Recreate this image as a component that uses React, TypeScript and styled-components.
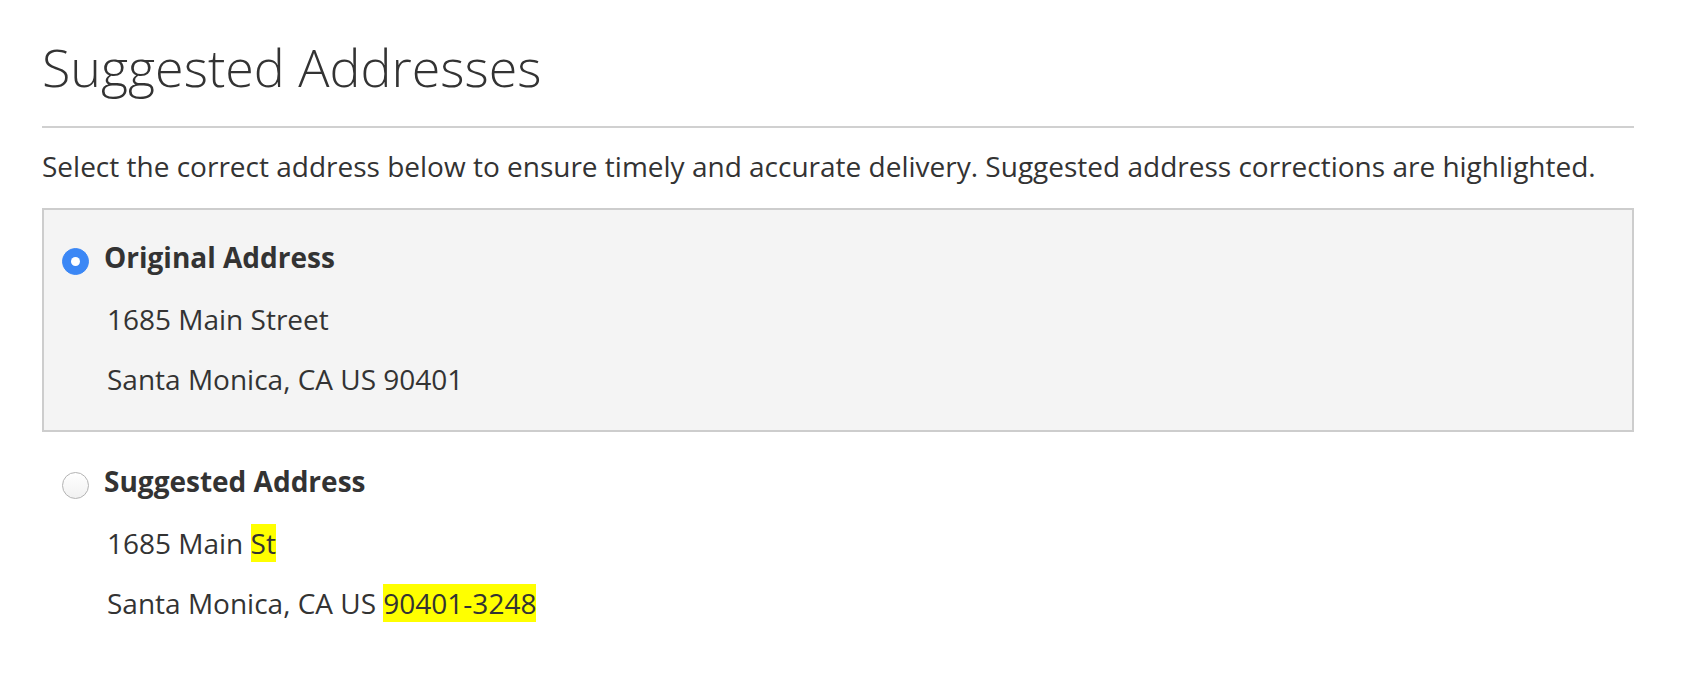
import React, { useState } from 'react';
import styled, { createGlobalStyle } from 'styled-components';

const GlobalStyle = createGlobalStyle`
  html, body {
    margin: 0;
    padding: 0;
    background: #fff;
  }
  body {
    font-family: "Open Sans", "Noto Sans", sans-serif;
    color: #333;
  }
`;

const Page = styled.div`
  padding: 32px 72px 20px 42px;
`;

const Header = styled.div`
  padding-bottom: 24px;
  border-bottom: 2px solid #d0d0d0;
`;

const Title = styled.h1`
  margin: 0;
  font-size: 52px;
  line-height: 70px;
  font-weight: 300;
  color: #333;
`;

const Intro = styled.p`
  margin: 19px 0 23px;
  font-size: 28px;
  line-height: 38px;
`;

const Option = styled.label<{ $selected: boolean }>`
  display: block;
  padding: 28px 20px 32px 18px;
  border: 2px solid ${({ $selected }) => ($selected ? '#cdcdcd' : 'transparent')};
  background: ${({ $selected }) => ($selected ? '#f4f4f4' : 'transparent')};
  cursor: pointer;
`;

const OptionHead = styled.div`
  display: flex;
  align-items: flex-start;
  gap: 15px;
`;

const Radio = styled.span<{ $checked: boolean }>`
  flex: none;
  position: relative;
  width: 27px;
  height: 27px;
  margin-top: 10px;
  border-radius: 50%;
  box-sizing: border-box;
  background: ${({ $checked }) =>
    $checked ? '#3b87f5' : 'linear-gradient(#fff, #f1f1f1)'};
  border: 1px solid ${({ $checked }) => ($checked ? '#3b87f5' : '#b3b3b3')};

  &::after {
    content: '';
    display: ${({ $checked }) => ($checked ? 'block' : 'none')};
    position: absolute;
    left: 50%;
    top: 50%;
    width: 9px;
    height: 9px;
    margin: -4.5px 0 0 -4.5px;
    border-radius: 50%;
    background: #fff;
  }
`;

const OptionName = styled.span`
  font-size: 28px;
  line-height: 38px;
  font-weight: 700;
`;

const Lines = styled.div`
  padding-left: 45px;
`;

const Line = styled.div`
  margin-top: 22px;
  font-size: 28px;
  line-height: 38px;

  &:first-child {
    margin-top: 24px;
  }
`;

const Mark = styled.mark`
  background: #ffff00;
  color: inherit;
`;

type Part = { text: string; changed?: boolean };

interface Address {
  id: string;
  name: string;
  lines: Part[][];
}

const addresses: Address[] = [
  {
    id: 'original',
    name: 'Original Address',
    lines: [
      [{ text: '1685 Main Street' }],
      [{ text: 'Santa Monica, CA US 90401' }],
    ],
  },
  {
    id: 'suggested',
    name: 'Suggested Address',
    lines: [
      [{ text: '1685 Main ' }, { text: 'St', changed: true }],
      [{ text: 'Santa Monica, CA US ' }, { text: '90401-3248', changed: true }],
    ],
  },
];

const App = () => {
  const [selected, setSelected] = useState('original');

  return (
    <>
      <GlobalStyle />
      <Page>
        <Header>
          <Title>Suggested Addresses</Title>
        </Header>
        <Intro>
          Select the correct address below to ensure timely and accurate delivery. Suggested
          address corrections are highlighted.
        </Intro>
        {addresses.map((a) => (
          <Option key={a.id} $selected={selected === a.id} onClick={() => setSelected(a.id)}>
            <OptionHead>
              <Radio $checked={selected === a.id} />
              <OptionName>{a.name}</OptionName>
            </OptionHead>
            <Lines>
              {a.lines.map((parts, i) => (
                <Line key={i}>
                  {parts.map((p, j) => (p.changed ? <Mark key={j}>{p.text}</Mark> : p.text))}
                </Line>
              ))}
            </Lines>
          </Option>
        ))}
      </Page>
    </>
  );
};

export default App;
